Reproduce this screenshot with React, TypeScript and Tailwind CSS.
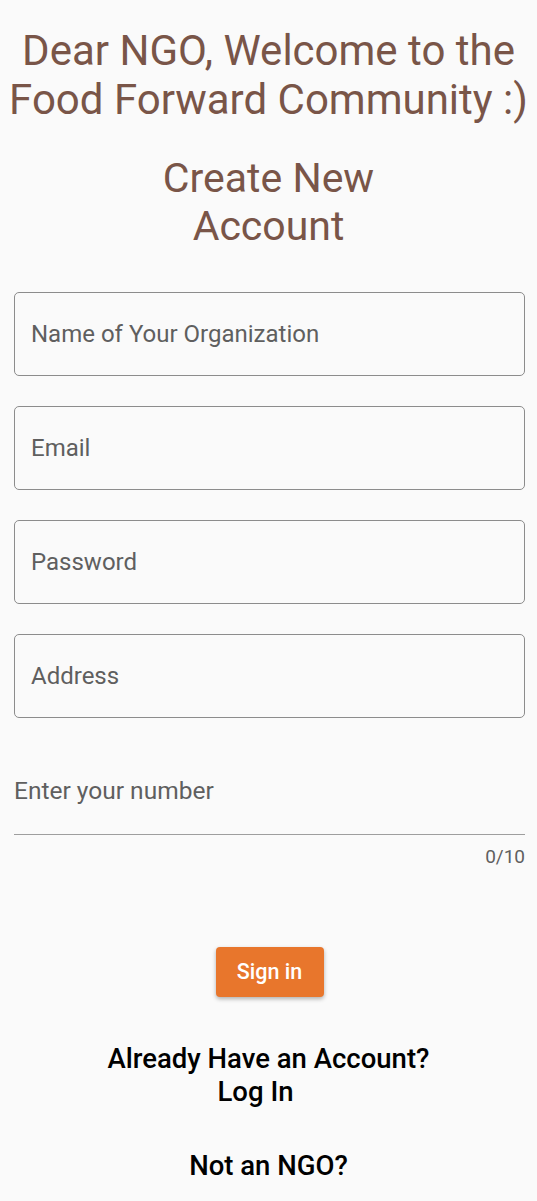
const fields = ['Name of Your Organization', 'Email', 'Password', 'Address'];

export default function App() {
  return (
    <div className="min-h-[1201px] bg-[#fafafa] font-['Roboto',sans-serif]">
      <div className="pt-[26px] flex flex-col">
        <h1 className="text-center text-[42px] leading-[49px] text-[#795548] whitespace-nowrap">
          Dear NGO, Welcome to the
          <br />
          Food Forward Community :)
        </h1>
        <h2 className="mt-[30px] text-center text-[41px] leading-[48px] text-[#795548]">
          Create New
          <br />
          Account
        </h2>

        <div className="pl-[14px] pr-[12px]">
          <div className="mt-[42px] flex flex-col gap-[30px]">
            {fields.map((f) => (
              <div
                key={f}
                className="flex h-[84px] items-center rounded-[5px] border border-[#8c8c8c] px-[16px]"
              >
                <span className="text-[24px] text-[#5f5f5f]">{f}</span>
              </div>
            ))}
          </div>

          <div className="mt-[48px] flex h-[69px] items-start border-b border-[#9e9e9e]">
            <span className="text-[24.5px] leading-[50px] text-[#5f5f5f]">Enter your number</span>
          </div>
          <div className="mt-[10px] text-right text-[19px] leading-[24px] text-[#5f5f5f]">0/10</div>
        </div>

        <div className="mt-[78px] flex justify-center">
          <button className="h-[50px] w-[108px] translate-x-[1px] rounded-[4px] bg-[#e8762c] text-[21.5px] font-medium text-white shadow-[0_2px_4px_rgba(0,0,0,0.3)]">
            Sign in
          </button>
        </div>

        <div className="mt-[45px] flex flex-col items-center text-[27.5px] font-medium leading-[33px] text-black">
          <span>Already Have an Account?</span>
          <span className="pr-[26px]">Log In</span>
        </div>
        <div className="mt-[41px] text-center text-[27.5px] font-medium leading-[33px] text-black">
          Not an NGO?
        </div>
      </div>
    </div>
  );
}
